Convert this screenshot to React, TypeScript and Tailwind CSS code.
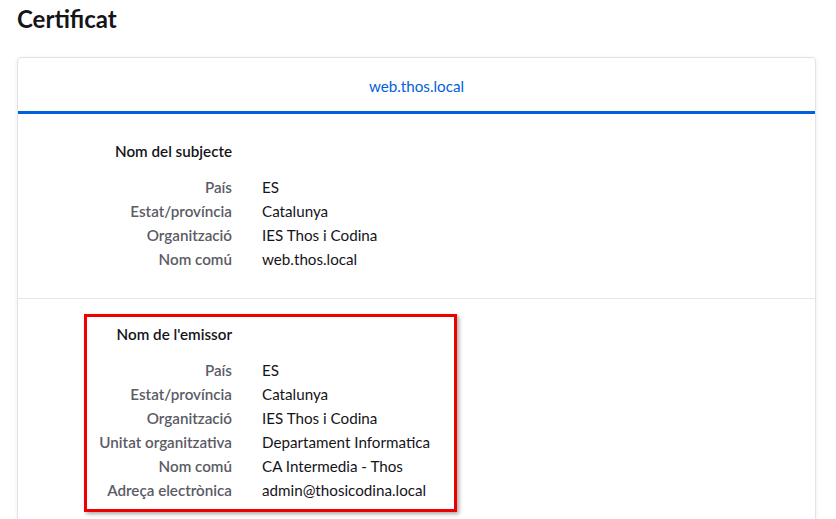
const subject = [
  ["País", "ES"],
  ["Estat/província", "Catalunya"],
  ["Organització", "IES Thos i Codina"],
  ["Nom comú", "web.thos.local"],
];

const issuer = [
  ["País", "ES"],
  ["Estat/província", "Catalunya"],
  ["Organització", "IES Thos i Codina"],
  ["Unitat organitzativa", "Departament Informatica"],
  ["Nom comú", "CA Intermedia - Thos"],
  ["Adreça electrònica", "admin@thosicodina.local"],
];

function Section({ title, rows }: { title: string; rows: string[][] }) {
  return (
    <div className="grid grid-cols-[214px_1fr] gap-x-[30px]">
      <div className="text-right font-semibold text-[#15141a] leading-6">{title}</div>
      <div />
      <div className="h-3 col-span-2" />
      {rows.map(([label, value]) => (
        <div key={label} className="contents">
          <div className="text-right font-semibold text-[#5b5b66] leading-6">{label}</div>
          <div className="text-[#15141a] leading-6">{value}</div>
        </div>
      ))}
    </div>
  );
}

export default function App() {
  return (
    <div
      className="w-[836px] h-[519px] overflow-hidden bg-white text-[15.2px]"
      style={{ fontFamily: "Lato, 'Open Sans', sans-serif" }}
    >
      <h1 className="pl-[17px] pt-[3px] text-[24px] font-bold text-[#15141a] leading-[32px]">Certificat</h1>
      <div className="ml-[17px] mt-[22px] w-[799px] rounded-[4px] border border-[#e3e3e7] shadow-[0_1px_4px_rgba(0,0,0,0.08)]">
        <div className="h-[56px] flex items-center justify-center border-b-[3px] border-[#0061e0]">
          <span className="text-[#0061e0] text-[15.2px] pt-[3px]">web.thos.local</span>
        </div>
        <div className="pt-[25px] pb-[27px]">
          <Section title="Nom del subjecte" rows={subject} />
        </div>
        <div className="border-t border-[#e6e6ea] pt-[23px] pb-8">
          <div className="relative">
            <div className="absolute left-[66px] top-[-8px] w-[373px] h-[198px] border-[3px] border-[#ee0000] shadow-[2px_2px_4px_rgba(0,0,0,0.35)] pointer-events-none" />
            <Section title="Nom de l'emissor" rows={issuer} />
          </div>
        </div>
      </div>
    </div>
  );
}
